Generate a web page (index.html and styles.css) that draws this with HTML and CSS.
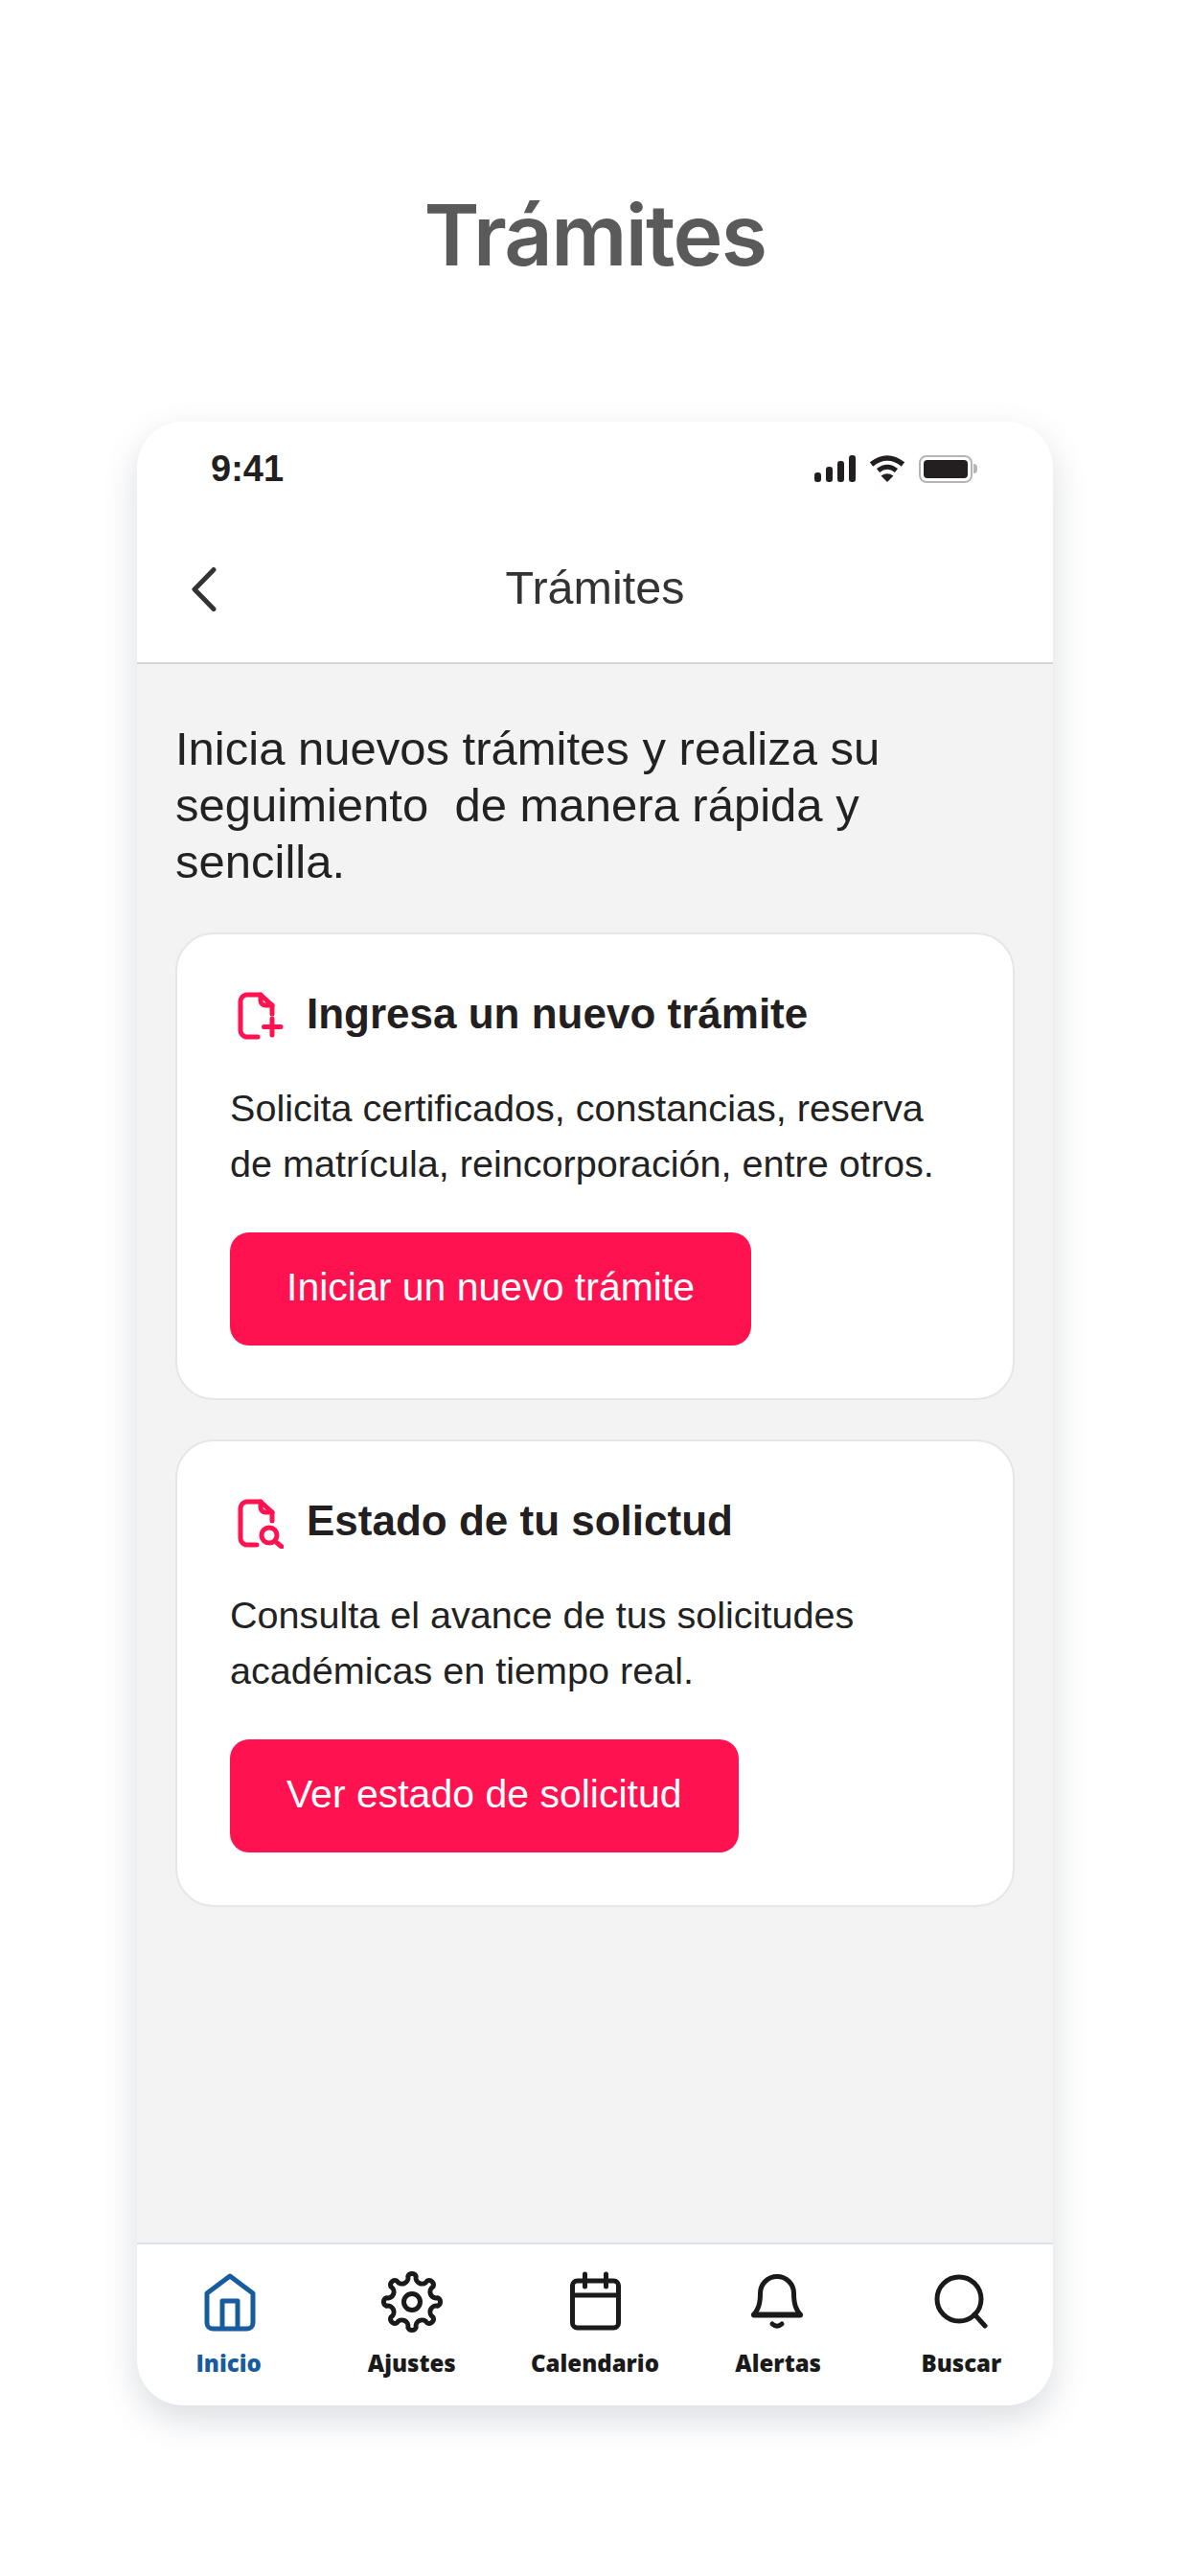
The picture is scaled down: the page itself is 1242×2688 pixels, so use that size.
FILE: index.html
```html
<!DOCTYPE html>
<html lang="es">
<head>
    <meta charset="UTF-8">
    <meta name="viewport" content="width=device-width, initial-scale=1.0">
    <title>Trámites</title>
    <link rel="stylesheet" href="styles.css">
</head>
<body>
    <h1 class="page-title">Trámites</h1>

    <div class="phone">
        <div class="status-bar">
            <span class="time">9:41</span>
            <div class="status-icons">
                <div class="signal">
                    <span class="bar bar1"></span>
                    <span class="bar bar2"></span>
                    <span class="bar bar3"></span>
                    <span class="bar bar4"></span>
                </div>
                <svg class="wifi" width="38" height="28" viewBox="0 0 38 28">
                    <path d="M2.5 9.5Q19-3.5 35.5 9.5" fill="none" stroke="#231f20" stroke-width="5.5"/>
                    <path d="M9.5 16Q19 8.5 28.5 16" fill="none" stroke="#231f20" stroke-width="5"/>
                    <path d="M19 28L12.5 21.5Q19 17 25.5 21.5Z" fill="#231f20"/>
                </svg>
                <div class="battery">
                    <div class="battery-body"><span class="battery-level"></span></div>
                    <span class="battery-cap"></span>
                </div>
            </div>
        </div>

        <header class="app-bar">
            <svg class="back" width="30" height="50" viewBox="0 0 30 50">
                <path d="M25 6.5L5 27L25 47.5" fill="none" stroke="#333" stroke-width="5" stroke-linecap="round" stroke-linejoin="round"/>
            </svg>
            <div class="app-bar-title">Trámites</div>
        </header>

        <main class="content">
            <p class="intro">Inicia nuevos trámites y realiza su seguimiento&nbsp; de manera rápida y sencilla.</p>

            <section class="card">
                <div class="card-head">
                    <svg class="card-icon" width="48" height="52" viewBox="0 0 48 52">
                        <path d="M21 47H10A7 7 0 0 1 3 40V10A7 7 0 0 1 10 3H24L36 14V23" fill="none" stroke="#ff124f" stroke-width="5" stroke-linecap="round" stroke-linejoin="round"/>
                        <path d="M24 3V9A5 5 0 0 0 29 14H36" fill="none" stroke="#ff124f" stroke-width="5" stroke-linecap="round"/>
                        <path d="M36 28V45M27.500 36.500H45" fill="none" stroke="#ff124f" stroke-width="5" stroke-linecap="round"/>
                    </svg>
                    <h2>Ingresa un nuevo trámite</h2>
                </div>
                <p class="card-text">Solicita certificados, constancias, reserva de matrícula, reincorporación, entre otros.</p>
                <a class="btn" href="#">Iniciar un nuevo trámite</a>
            </section>

            <section class="card">
                <div class="card-head">
                    <svg class="card-icon" width="48" height="52" viewBox="0 0 48 52">
                        <path d="M20 48H10A7 7 0 0 1 3 41V10A7 7 0 0 1 10 3H24L36 14V23" fill="none" stroke="#ff124f" stroke-width="5" stroke-linecap="round" stroke-linejoin="round"/>
                        <path d="M24 3V9A5 5 0 0 0 29 14H36" fill="none" stroke="#ff124f" stroke-width="5" stroke-linecap="round"/>
                        <circle cx="33" cy="38" r="8" fill="none" stroke="#ff124f" stroke-width="5"/>
                        <path d="M39.500 44.500L46 50" fill="none" stroke="#ff124f" stroke-width="5" stroke-linecap="round"/>
                    </svg>
                    <h2>Estado de tu solictud</h2>
                </div>
                <p class="card-text">Consulta el avance de tus solicitudes académicas en tiempo real.</p>
                <a class="btn" href="#">Ver estado de solicitud</a>
            </section>
        </main>

        <nav class="tab-bar">
            <a class="tab active" href="#">
                <svg width="70" height="70" viewBox="0 0 70 70">
                    <path d="M36 8L60 26V57A6 6 0 0 1 54 63H18A6 6 0 0 1 12 57V26Z" fill="none" stroke="currentColor" stroke-width="5" stroke-linejoin="round"/>
                    <path d="M28 63V34H44V63" fill="none" stroke="currentColor" stroke-width="5" stroke-linejoin="round"/>
                </svg>
                <span>Inicio</span>
            </a>
            <a class="tab" href="#">
                <svg width="70" height="70" viewBox="0 0 70 70">
                    <path d="M30.800 8.200A4.600 4.600 0 0 1 39.200 8.200A6.400 6.400 0 0 0 50.900 13A4.600 4.600 0 0 1 57 19.100A6.400 6.400 0 0 0 61.800 30.800A4.600 4.600 0 0 1 61.800 39.200A6.400 6.400 0 0 0 57 50.900A4.600 4.600 0 0 1 50.900 57A6.400 6.400 0 0 0 39.200 61.800A4.600 4.600 0 0 1 30.800 61.800A6.400 6.400 0 0 0 19.100 57A4.600 4.600 0 0 1 13 50.900A6.400 6.400 0 0 0 8.200 39.200A4.600 4.600 0 0 1 8.200 30.800A6.400 6.400 0 0 0 13 19.100A4.600 4.600 0 0 1 19.100 13A6.400 6.400 0 0 0 30.800 8.200Z" fill="none" stroke="currentColor" stroke-width="5" stroke-linejoin="round"/>
                    <circle cx="35" cy="35" r="8.500" fill="none" stroke="currentColor" stroke-width="5"/>
                </svg>
                <span>Ajustes</span>
            </a>
            <a class="tab" href="#">
                <svg width="70" height="70" viewBox="0 0 70 70">
                    <rect x="11.500" y="13" width="48" height="49" rx="5" fill="none" stroke="currentColor" stroke-width="5"/>
                    <path d="M11.500 28H59.500M24.500 6V19M46.500 6V19" fill="none" stroke="currentColor" stroke-width="5" stroke-linecap="round"/>
                </svg>
                <span>Calendario</span>
            </a>
            <a class="tab" href="#">
                <svg width="70" height="70" viewBox="0 0 70 70">
                    <path d="M10 48C14 43 16.500 38 16.500 26A17.500 17.500 0 0 1 51.500 26C51.500 38 54 43 58 48" fill="none" stroke="currentColor" stroke-width="5" stroke-linecap="round"/>
                    <path d="M10 48.500H58" fill="none" stroke="currentColor" stroke-width="6" stroke-linecap="round"/>
                    <path d="M29 58Q34 62.500 39 58" fill="none" stroke="currentColor" stroke-width="5" stroke-linecap="round"/>
                </svg>
                <span>Alertas</span>
            </a>
            <a class="tab" href="#">
                <svg width="70" height="70" viewBox="0 0 70 70">
                    <circle cx="33" cy="32" r="23" fill="none" stroke="currentColor" stroke-width="5"/>
                    <path d="M49 48L60 60" fill="none" stroke="currentColor" stroke-width="5" stroke-linecap="round"/>
                </svg>
                <span>Buscar</span>
            </a>
        </nav>
    </div>
</body>
</html>
```

FILE: styles.css
```css
body {
    margin: 0;
    padding-bottom: 178px;
    background: #fff;
    font-family: "Liberation Sans", Arial, sans-serif;
    color: #222;
}

.page-title {
    margin: 0;
    height: 390px;
    padding-top: 50px;
    display: flex;
    justify-content: center;
    align-items: center;
    font-family: Inter, sans-serif;
    font-size: 88px;
    font-weight: 600;
    letter-spacing: -1.7px;
    color: #5a5a5a;
}

.phone {
    width: 956px;
    height: 2070px;
    margin: 0 auto;
    display: flex;
    flex-direction: column;
    background: #fff;
    border-radius: 48px;
    overflow: hidden;
    box-shadow: 0 14px 36px rgba(70, 80, 100, 0.2);
}

/* Status bar */
.status-bar {
    height: 98px;
    flex-shrink: 0;
    display: flex;
    justify-content: space-between;
    align-items: center;
    padding: 0 79px 0 77px;
}

.time {
    font-size: 38px;
    font-weight: bold;
    color: #231f20;
}

.status-icons {
    display: flex;
    align-items: center;
    gap: 14px;
}

.signal {
    display: flex;
    align-items: flex-end;
    gap: 5px;
    height: 28px;
}

.bar {
    width: 7px;
    border-radius: 3px;
    background: #231f20;
}

.bar1 { height: 10px; }
.bar2 { height: 16px; }
.bar3 { height: 22px; }
.bar4 { height: 28px; }

.battery {
    display: flex;
    align-items: center;
    gap: 1px;
}

.battery-body {
    width: 56px;
    height: 29px;
    box-sizing: border-box;
    padding: 3px;
    border: 2px solid #b5b5b5;
    border-radius: 8px;
}

.battery-level {
    display: block;
    height: 100%;
    border-radius: 4px;
    background: #231f20;
}

.battery-cap {
    width: 4px;
    height: 10px;
    border-radius: 0 4px 4px 0;
    background: #b5b5b5;
}

/* App bar */
.app-bar {
    height: 155px;
    flex-shrink: 0;
    box-sizing: border-box;
    display: grid;
    grid-template-columns: 1fr auto 1fr;
    align-items: center;
    padding: 0 55px 4px;
    border-bottom: 2px solid #d6d6d8;
}

.app-bar-title {
    font-size: 48.5px;
    color: #333;
}

/* Content */
.content {
    flex: 1;
    display: flex;
    flex-direction: column;
    gap: 41px;
    padding: 59px 40px 0;
    background: #f3f3f4;
}

.intro {
    margin: 0 0 3px;
    font-size: 49px;
    line-height: 59px;
    color: #222;
}

.card {
    box-sizing: border-box;
    height: 488px;
    padding: 14px 55px 0;
    background: #fff;
    border: 2px solid #e6e6e8;
    border-radius: 40px;
}

.card-head {
    height: 138px;
    display: flex;
    align-items: center;
    gap: 24px;
    padding-left: 8px;
}

.card-icon {
    margin-top: 6px;
}

.card-head h2 {
    margin: 0;
    font-size: 44px;
    font-weight: bold;
    color: #231f20;
}

.card-text {
    margin: 0;
    width: 770px;
    font-size: 39.6px;
    line-height: 58px;
    color: #222;
}

.btn {
    display: inline-block;
    margin-top: 43px;
    padding: 0 59px;
    height: 118px;
    line-height: 114px;
    font-size: 41px;
    color: #fff;
    text-decoration: none;
    background: #ff124f;
    border-radius: 20px;
}

/* Bottom tabs */
.tab-bar {
    height: 170px;
    flex-shrink: 0;
    box-sizing: border-box;
    display: grid;
    grid-template-columns: repeat(5, 1fr);
    padding-top: 25px;
    border-top: 2px solid #dcdfec;
}

.tab {
    display: flex;
    flex-direction: column;
    align-items: center;
    gap: 12px;
    text-decoration: none;
    color: #1a1a1a;
    font-family: "Open Sans", sans-serif;
    font-size: 24px;
    font-weight: 800;
}

.tab.active {
    color: #175c9f;
}
```
